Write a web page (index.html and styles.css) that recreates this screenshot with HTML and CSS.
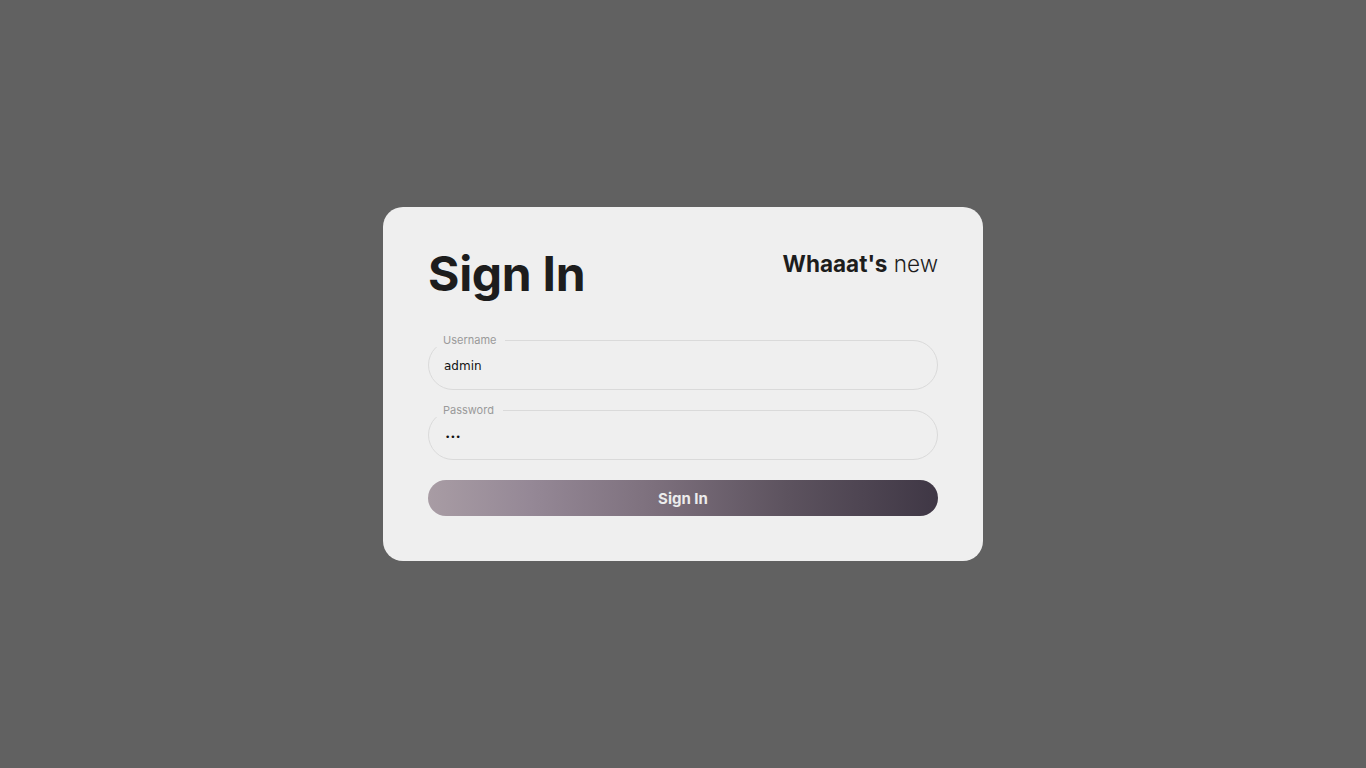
FILE: index.html
```html
<!DOCTYPE html>
<html lang="en">
<head>
<meta charset="utf-8">
<title>Sign In</title>
<link rel="stylesheet" href="styles.css">
</head>
<body>
<main class="page">
  <section class="card">
    <header class="card-head">
      <h1 class="title">Sign In</h1>
      <p class="news"><strong>Whaaat's</strong> new</p>
    </header>
    <form class="form">
      <fieldset class="field">
        <legend class="field-label">Username</legend>
        <input class="field-input" type="text" value="admin">
      </fieldset>
      <fieldset class="field">
        <legend class="field-label">Password</legend>
        <input class="field-input field-input--secret" type="password" value="abc">
      </fieldset>
      <button class="submit" type="button">Sign In</button>
    </form>
  </section>
</main>
</body>
</html>
```
FILE: styles.css
```css
* { box-sizing: border-box; }
html, body { margin: 0; height: 100%; }
body {
  background: #616161;
  font-family: Inter, "Noto Sans", sans-serif;
}
.page {
  height: 100%;
  display: flex;
  align-items: center;
  justify-content: center;
}
.card {
  width: 600px;
  height: 354px;
  background: #efefef;
  border-radius: 20px;
  padding: 45px;
}
.card-head {
  display: flex;
  justify-content: space-between;
  align-items: flex-start;
}
.title {
  margin: -2px 0 2px;
  font-size: 48px;
  line-height: 48px;
  font-weight: 700;
  color: #1d1d1d;
  letter-spacing: -0.3px;
}
.news {
  margin: -1px 0 0;
  font-size: 22.5px;
  line-height: 26px;
  color: #1d1d1d;
  font-weight: 300;
}
.news strong { font-weight: 700; }
.form {
  margin-top: 34px;
  display: flex;
  flex-direction: column;
}
.field {
  margin: 0 0 8px;
  border: 1px solid #dadada;
  border-radius: 25px;
  padding: 0 7px 8px;
  min-width: 0;
}
.field-label {
  padding: 0 9px 0 7px;
  font-size: 11px;
  line-height: 13px;
  color: #9a9a9a;
  font-weight: 400;
}
.field-input {
  display: block;
  width: 100%;
  height: 34px;
  border: none;
  background: transparent;
  outline: none;
  padding: 4px 8px 0;
  font-family: "DejaVu Sans", sans-serif;
  font-size: 12px;
  color: #111;
}
.field-input--secret {
  font-size: 9px;
  padding-top: 6px;
  padding-left: 9px;
}
.field + .field { margin-top: 6px; }
.submit {
  margin-top: 12px;
  height: 36px;
  border: none;
  border-radius: 18px;
  background: linear-gradient(90deg, #a89ca4 0%, #958896 20%, #7c6f7c 45%, #5d535f 70%, #3f3745 100%);
  color: #ececec;
  font-family: Inter, sans-serif;
  font-weight: 700;
  font-size: 15px;
  cursor: pointer;
}
```
